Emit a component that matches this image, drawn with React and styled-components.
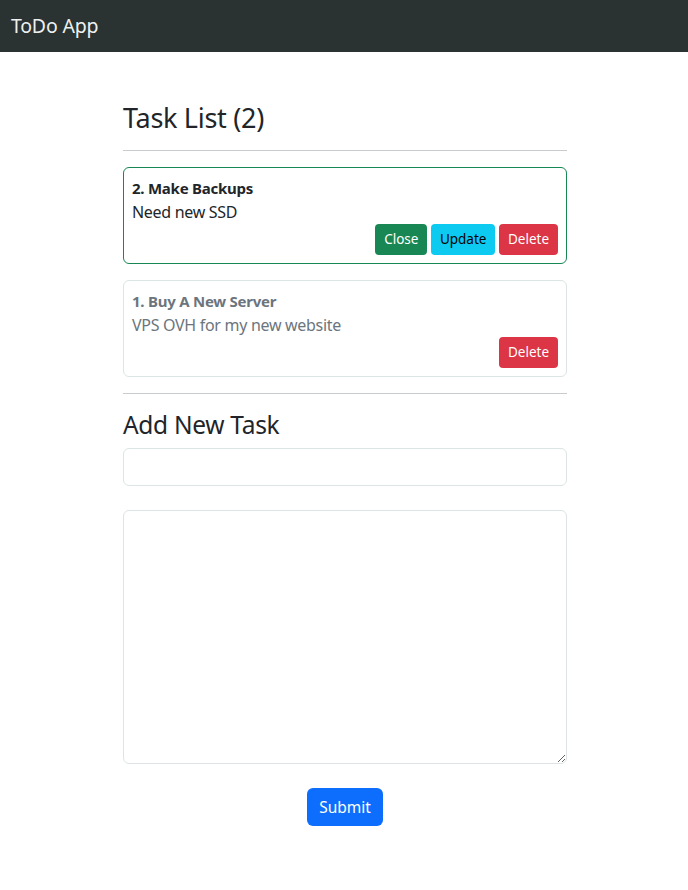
import styled, { createGlobalStyle } from "styled-components";

const GlobalStyle = createGlobalStyle`
  * { box-sizing: border-box; }
  body {
    margin: 0;
    font-family: "Noto Sans", "Open Sans", sans-serif;
    font-size: 16px;
    line-height: 1.5;
    color: #212529;
    background: #fff;
  }
`;

const Navbar = styled.nav`
  height: 52px;
  background-color: #2a3232;
  display: flex;
  align-items: center;
  padding: 0 11px;
`;

const Brand = styled.span`
  font-size: 19.5px;
  color: #eef0f0;
  letter-spacing: -0.2px;
`;

const Container = styled.main`
  width: 444px;
  margin: 49px 0 0 123px;
  padding-bottom: 40px;
`;

const Title = styled.h2`
  font-size: 27px;
  font-weight: 400;
  line-height: 33px;
  margin: 0 0 8px;
  letter-spacing: -0.3px;
`;

const SubTitle = styled.h3`
  font-size: 24.5px;
  font-weight: 400;
  line-height: 30px;
  margin: 0 0 8px;
  letter-spacing: -0.3px;
`;

const Hr = styled.hr`
  border: none;
  border-top: 1px solid #c9cccf;
  margin: 16px 0;
`;

const Card = styled.div`
  border: 1px solid ${(props) => (props.active ? "#198754" : "#dce4e5")};
  border-radius: 6px;
  padding: 8px;
  margin-bottom: ${(props) => (props.last ? "0" : "16px")};
  color: ${(props) => (props.active ? "#212529" : "#6c757d")};
`;

const CardTitle = styled.div`
  font-weight: 700;
  font-size: 15px;
  line-height: 24px;
  letter-spacing: -0.25px;
`;

const CardText = styled.div`
  font-size: 16px;
  line-height: 24px;
  letter-spacing: -0.3px;
`;

const Actions = styled.div`
  display: flex;
  justify-content: flex-end;
  gap: 3.5px;
`;

const colors = {
  success: { bg: "#198754", fg: "#fff" },
  info: { bg: "#0dcaf0", fg: "#000" },
  danger: { bg: "#dc3545", fg: "#fff" },
};

const SmallButton = styled.button`
  font-family: inherit;
  font-size: 13.5px;
  line-height: 23px;
  padding: 4px 9px;
  border: none;
  border-radius: 4px;
  background-color: ${(props) => colors[props.variant].bg};
  color: ${(props) => colors[props.variant].fg};
  cursor: pointer;
`;

const Input = styled.input`
  display: block;
  width: 100%;
  height: 38px;
  border: 1px solid #dce4e5;
  border-radius: 6px;
  padding: 6px 12px;
  font-family: inherit;
  font-size: 16px;
  margin-bottom: 24px;
`;

const TextArea = styled.textarea`
  display: block;
  width: 100%;
  height: 254px;
  border: 1px solid #dce4e5;
  border-radius: 6px;
  padding: 6px 12px;
  font-family: inherit;
  font-size: 16px;
  margin: 0 0 24px;
`;

const Center = styled.div`
  display: flex;
  justify-content: center;
`;

const SubmitButton = styled.button`
  font-family: inherit;
  font-size: 15.5px;
  height: 38px;
  padding: 0 12px;
  border: none;
  border-radius: 6px;
  background-color: #0d6efd;
  color: #fff;
  cursor: pointer;
`;

const tasks = [
  { id: 2, title: "Make Backups", text: "Need new SSD", active: true },
  { id: 1, title: "Buy A New Server", text: "VPS OVH for my new website", active: false },
];

const App = () => {
  return (
    <>
      <GlobalStyle />
      <Navbar>
        <Brand>ToDo App</Brand>
      </Navbar>
      <Container>
        <Title>Task List ({tasks.length})</Title>
        <Hr />
        {tasks.map((task, i) => (
          <Card key={task.id} active={task.active} last={i === tasks.length - 1}>
            <CardTitle>
              {task.id}. {task.title}
            </CardTitle>
            <CardText>{task.text}</CardText>
            <Actions>
              {task.active && <SmallButton variant="success">Close</SmallButton>}
              {task.active && <SmallButton variant="info">Update</SmallButton>}
              <SmallButton variant="danger">Delete</SmallButton>
            </Actions>
          </Card>
        ))}
        <Hr />
        <SubTitle>Add New Task</SubTitle>
        <Input type="text" />
        <TextArea />
        <Center>
          <SubmitButton>Submit</SubmitButton>
        </Center>
      </Container>
    </>
  );
};

export default App;
